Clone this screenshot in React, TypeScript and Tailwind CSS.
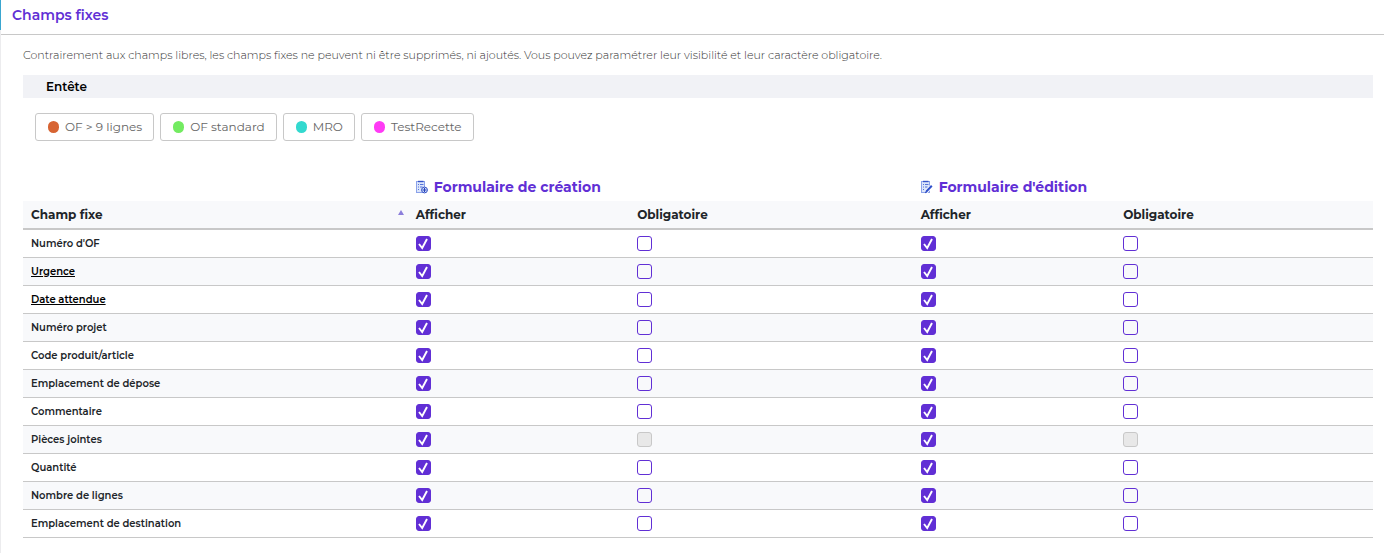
import { ReactNode } from "react";

type Field = { label: string; link?: boolean; locked?: boolean };

const types = [
  { name: "OF > 9 lignes", color: "bg-[#d76433]" },
  { name: "OF standard", color: "bg-[#73eb61]" },
  { name: "MRO", color: "bg-[#33d9cf]" },
  { name: "TestRecette", color: "bg-[#ff3bf5]" },
];

const fields: Field[] = [
  { label: "Numéro d'OF" },
  { label: "Urgence", link: true },
  { label: "Date attendue", link: true },
  { label: "Numéro projet" },
  { label: "Code produit/article" },
  { label: "Emplacement de dépose" },
  { label: "Commentaire" },
  { label: "Pièces jointes", locked: true },
  { label: "Quantité" },
  { label: "Nombre de lignes" },
  { label: "Emplacement de destination" },
];

function Check({ label, checked, disabled }: { label: string; checked?: boolean; disabled?: boolean }) {
  return (
    <span className="relative block size-[15px]">
      <input
        type="checkbox"
        aria-label={label}
        defaultChecked={checked}
        disabled={disabled}
        className="peer block size-[15px] appearance-none rounded-[3px] border border-[#612fd5] bg-transparent checked:bg-[#612fd5] disabled:border-[#c8c8c8] disabled:bg-[#e8e8e8]"
      />
      <svg
        viewBox="0 0 15 15"
        className="pointer-events-none absolute inset-0 hidden size-[15px] peer-checked:block"
        fill="none"
        stroke="#fff"
        strokeWidth="1.9"
      >
        <path d="M3 8 6.2 12 11 3" />
      </svg>
    </span>
  );
}

function Sheet({ children }: { children: ReactNode }) {
  return (
    <svg viewBox="0 0 12 14" className="h-[14px] w-3" fill="none" aria-hidden="true">
      <rect x=".5" y="1.5" width="8" height="11" fill="#dbe5fa" stroke="#8ba2ea" />
      <path d="M2 1.500h5.500" stroke="#3452c8" strokeWidth="1.400" />
      <path d="M2 4.500h1M4 4.500h3.500M2 7h1M4 7h2.500M2 9.500h1" stroke="#5673d8" />
      {children}
    </svg>
  );
}

function CreateIcon() {
  return (
    <Sheet>
      <circle cx="8.500" cy="10" r="2.900" fill="#e6edff" stroke="#2e4dc4" />
      <path d="M8.500 8v4M6.500 10h4" stroke="#2443b8" strokeWidth="1.200" />
    </Sheet>
  );
}

function EditIcon() {
  return (
    <Sheet>
      <path d="M5 12 10.500 6" stroke="#fff" strokeWidth="3.400" />
      <path d="M5.100 11.800 10.800 5.800" stroke="#2f50cb" strokeWidth="2" />
      <path d="m4 13.200.6-2 1.400 1.300z" fill="#2443b8" />
    </Sheet>
  );
}

function Group({ icon, children }: { icon: ReactNode; children: ReactNode }) {
  return (
    <th colSpan={2} scope="colgroup" className="h-7 px-2 text-left text-[14px] leading-5 font-bold text-[#612fd5]">
      <span className="flex items-center gap-[6px]">
        {icon}
        {children}
      </span>
    </th>
  );
}

const head = "h-[29px] border-b-2 border-[#c8c8c8] bg-[#f8f9fb] px-2 text-left text-[12px] leading-5 font-bold";
const cell = "h-7 border-b border-[#c8c8c8] px-2";

export default function App() {
  return (
    <div className="flex min-h-screen bg-white font-['Montserrat','Inter',sans-serif] text-[#212529]">
      <div className="w-px shrink-0 bg-[#ececee]">
        <div className="h-[30px] bg-[#3aa6d0]" />
      </div>
      <main className="min-w-0 grow">
        <h1 className="h-[35px] border-b border-[#c8c8c8] px-[11px] py-[5px] text-[14px] leading-5 font-semibold text-[#612fd5]">
          Champs fixes
        </h1>
        <div className="px-[11px]">
          <div className="pl-[11px]">
            <p className="pt-3 pb-3 text-[11px] leading-4 font-light text-[#333]">
              Contrairement aux champs libres, les champs fixes ne peuvent ni être supprimés, ni ajoutés. Vous pouvez
              paramétrer leur visibilité et leur caractère obligatoire.
            </p>
            <h2 className="h-[23px] bg-[#f1f2f6] px-[23px] text-[12px] leading-[23px] font-semibold text-black">
              Entête
            </h2>
            <div className="flex flex-wrap gap-[6px] px-3 pt-[15px]">
              {types.map((t) => (
                <button
                  key={t.name}
                  type="button"
                  className="flex h-7 items-center gap-[6px] rounded-[3px] border border-[#c8c8c8] pr-[11px] pl-3 text-[12px] leading-5 font-normal text-[#666]"
                >
                  <span className={`h-3 w-[11px] rounded-full ${t.color}`} />
                  {t.name}
                </button>
              ))}
            </div>
            <table className="mt-8 w-full table-fixed border-separate border-spacing-0">
              <colgroup>
                <col className="w-[28.5%]" />
                <col className="w-[16.4%]" />
                <col className="w-[21%]" />
                <col className="w-[15%]" />
                <col />
              </colgroup>
              <thead>
                <tr>
                  <td />
                  <Group icon={<CreateIcon />}>Formulaire de création</Group>
                  <Group icon={<EditIcon />}>Formulaire d'édition</Group>
                </tr>
                <tr>
                  <th scope="col" aria-sort="ascending" className={head}>
                    <span className="flex items-center justify-between">
                      Champ fixe
                      <svg viewBox="0 0 6 10" className="-mr-1 h-[10px] w-[6px]" aria-hidden="true">
                        <path d="M3 0 6 5H0z" fill="#8c7fdb" />
                      </svg>
                    </span>
                  </th>
                  <th scope="col" className={head}>Afficher</th>
                  <th scope="col" className={head}>Obligatoire</th>
                  <th scope="col" className={head}>Afficher</th>
                  <th scope="col" className={head}>Obligatoire</th>
                </tr>
              </thead>
              <tbody>
                {fields.map((f) => (
                  <tr key={f.label} className="even:bg-[#f8f9fb]">
                    <th
                      scope="row"
                      className="h-7 border-b border-[#c8c8c8] px-2 text-left text-[10px] leading-4 font-semibold"
                    >
                      {f.link ? (
                        <a href="#" className="text-black underline">
                          {f.label}
                        </a>
                      ) : (
                        f.label
                      )}
                    </th>
                    <td className={cell}>
                      <Check label={`${f.label} : afficher en création`} checked />
                    </td>
                    <td className={cell}>
                      <Check label={`${f.label} : obligatoire en création`} disabled={f.locked} />
                    </td>
                    <td className={cell}>
                      <Check label={`${f.label} : afficher en édition`} checked />
                    </td>
                    <td className={cell}>
                      <Check label={`${f.label} : obligatoire en édition`} disabled={f.locked} />
                    </td>
                  </tr>
                ))}
              </tbody>
            </table>
          </div>
        </div>
      </main>
    </div>
  );
}
